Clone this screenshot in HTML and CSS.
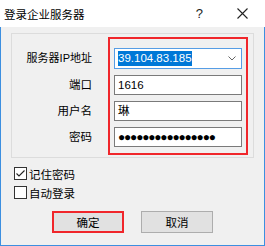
FILE: index.html
```html
<!DOCTYPE html>
<html>
<head>
<meta charset="utf-8">
<link rel="stylesheet" href="styles.css">
</head>
<body>
<div class="window">
  <div class="titlebar">
    <span class="title">登录企业服务器</span>
    <span class="help">?</span>
    <svg class="close" width="11" height="11" viewBox="0 0 11 11"><path d="M0.5 0.5 L10.5 10.5 M10.5 0.5 L0.5 10.5" stroke="#222" stroke-width="1.1" fill="none"/></svg>
  </div>
  <div class="content">
    <div class="group">
      <div class="labels">
        <div class="label tall">服务器IP地址</div>
        <div class="label">端口</div>
        <div class="label">用户名</div>
        <div class="label">密码</div>
      </div>
      <div class="redbox">
        <div class="field combo"><span class="sel">39.104.83.185</span>
          <svg class="arrow" width="8" height="5" viewBox="0 0 8 5"><path d="M0.5 0.5 L4 4 L7.5 0.5" stroke="#666" stroke-width="1" fill="none"/></svg>
        </div>
        <div class="field">1616</div>
        <div class="field">琳</div>
        <div class="field dots">●●●●●●●●●●●●●●●●</div>
      </div>
    </div>
    <div class="checks">
      <div class="check"><span class="box"><svg width="11" height="11" viewBox="0 0 11 11"><path d="M1.5 5.5 L4 8 L9.5 2.5" stroke="#222" stroke-width="1.1" fill="none"/></svg></span>记住密码</div>
      <div class="check"><span class="box"></span>自动登录</div>
    </div>
    <div class="buttons">
      <div class="btn ok">确定</div>
      <div class="btn">取消</div>
    </div>
  </div>
</div>
</body>
</html>
```
FILE: styles.css
```css
html, body { margin: 0; padding: 0; }
body {
  font-family: "Liberation Sans", "Noto Sans CJK SC", sans-serif;
  font-size: 11.5px;
  color: #000;
  background: #fff;
}
.window {
  width: 265px;
  height: 246px;
  box-sizing: border-box;
  border: 1px solid #3c8fe0;
  border-top: none;
  display: flex;
  flex-direction: column;
  background: #f0f0f0;
}
.titlebar {
  height: 27px;
  background: #fff;
  display: flex;
  align-items: center;
  margin: 0 -1px;
  padding-left: 4px;
  flex-shrink: 0;
}
.title { font-size: 11.5px; flex: 1; }
.help { font-size: 13px; margin-right: 34px; color: #222; }
.close { margin-right: 17px; }
.content {
  flex: 1;
  padding: 6px 10px 0 10px;
  display: flex;
  flex-direction: column;
}
.group {
  width: 243px;
  height: 125px;
  box-sizing: border-box;
  border: 1px solid #dcdcdc;
  display: flex;
  padding-top: 3px;
}
.labels {
  width: 80px;
  padding-top: 11px;
  display: flex;
  flex-direction: column;
  gap: 6px;
}
.label {
  height: 20px;
  line-height: 20px;
  text-align: right;
}
.label.tall { height: 21px; line-height: 21px; font-size: 11px; }
.redbox {
  margin-left: 16px;
  width: 140px;
  height: 118px;
  box-sizing: border-box;
  border: 2px solid #f0262b;
  padding: 9px 4px 0 4px;
  display: flex;
  flex-direction: column;
  gap: 6px;
}
.field {
  height: 20px;
  box-sizing: border-box;
  border: 1px solid #7a7a7a;
  background: #fff;
  padding-left: 3px;
  line-height: 18px;
  font-size: 11.5px;
}
.combo {
  height: 21px;
  border-color: #569de5;
  display: flex;
  align-items: center;
  justify-content: space-between;
  padding-right: 5px;
}
.sel {
  background: #0078d7;
  color: #fff;
  line-height: 15px;
}
.dots { font-size: 12px; letter-spacing: -1.2px; line-height: 18px; }
.checks {
  margin-top: 9px;
  margin-left: 3px;
  display: flex;
  flex-direction: column;
  gap: 6px;
}
.check { display: flex; align-items: center; height: 13px; }
.box {
  width: 13px;
  height: 13px;
  box-sizing: border-box;
  border: 1px solid #333;
  background: #fff;
  margin-right: 2px;
  display: flex;
}
.box svg { display: block; }
.buttons {
  margin-top: 12px;
  margin-left: 41px;
  display: flex;
  gap: 17px;
}
.btn {
  width: 72px;
  height: 22px;
  box-sizing: border-box;
  border: 1px solid #adadad;
  background: #e1e1e1;
  display: flex;
  align-items: center;
  justify-content: center;
}
.btn.ok { border: 2px solid #f0262b; }
```
